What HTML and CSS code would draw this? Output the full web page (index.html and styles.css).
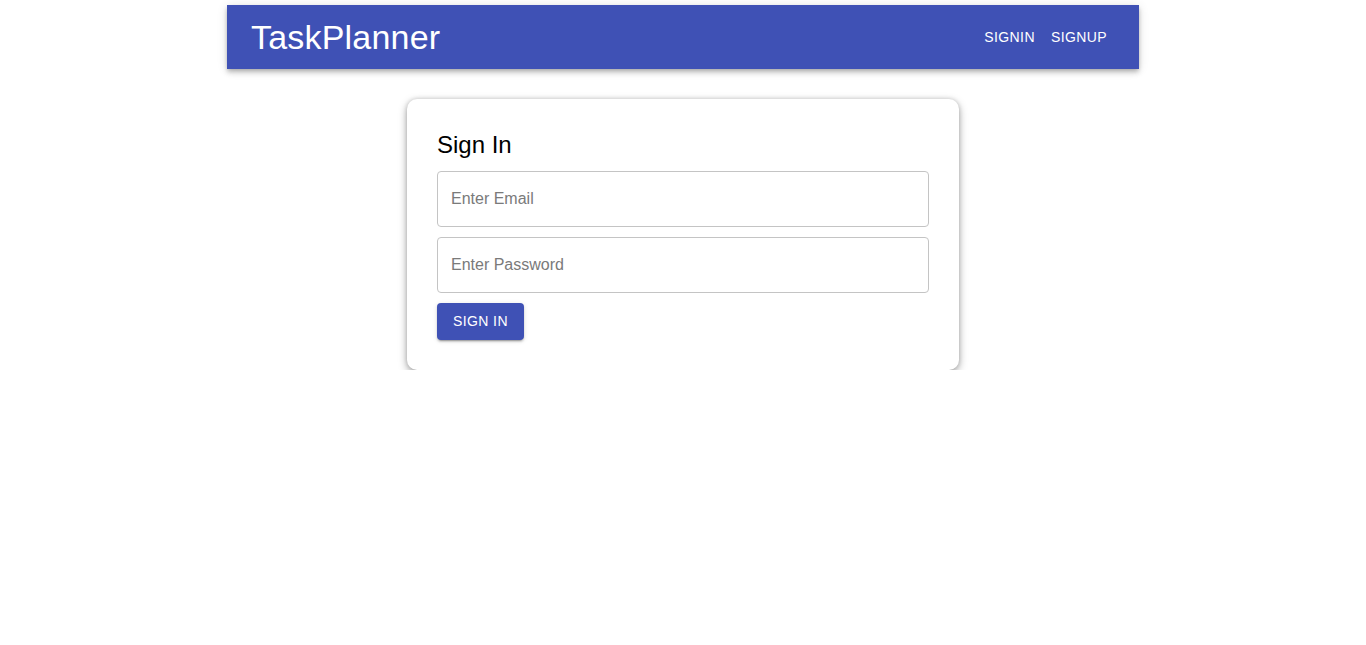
FILE: index.html
```html
<!DOCTYPE html>
<html lang="en">
<head>
<meta charset="utf-8">
<title>TaskPlanner</title>
<link rel="stylesheet" href="styles.css">
</head>
<body>
<div class="container">
  <header class="appbar">
    <div class="brand">TaskPlanner</div>
    <nav class="nav">
      <a class="nav-btn" href="#">Signin</a>
      <a class="nav-btn" href="#">Signup</a>
    </nav>
  </header>
  <main class="main">
    <form class="card">
      <h2 class="card-title">Sign In</h2>
      <input class="field" type="email" placeholder="Enter Email">
      <input class="field" type="password" placeholder="Enter Password">
      <div class="actions">
        <button class="btn" type="button">Sign In</button>
      </div>
    </form>
  </main>
</div>
</body>
</html>
```

FILE: styles.css
```css
* { box-sizing: border-box; }
html, body { margin: 0; padding: 0; background: #fff; }
body {
  font-family: "Liberation Sans", Arial, sans-serif;
  color: rgba(0,0,0,0.87);
}
.container {
  width: 912px;
  margin: 5px auto 0;
}
.appbar {
  height: 64px;
  background: #3f51b5;
  color: #fff;
  display: flex;
  align-items: center;
  justify-content: space-between;
  padding: 0 24px;
  box-shadow: 0 2px 4px -1px rgba(0,0,0,0.2), 0 4px 5px 0 rgba(0,0,0,0.14), 0 1px 10px 0 rgba(0,0,0,0.12);
}
.brand {
  font-size: 34px;
  line-height: 1.2;
  font-weight: 400;
  letter-spacing: 0.2px;
}
.nav { display: flex; gap: 0; }
.nav-btn {
  color: #fff;
  text-decoration: none;
  text-transform: uppercase;
  font-size: 14px;
  letter-spacing: 0.4px;
  padding: 6px 8px;
  line-height: 24px;
}
.main {
  display: flex;
  justify-content: center;
  padding-top: 30px;
}
.card {
  width: 552px;
  background: #fff;
  border-radius: 10px;
  padding: 30px;
  box-shadow: 0 3px 8px rgba(0,0,0,0.35), 0 0 4px rgba(0,0,0,0.15);
  display: flex;
  flex-direction: column;
}
.card-title {
  margin: 0 0 10px;
  font-size: 24px;
  font-weight: 400;
  line-height: 32px;
  color: #000;
}
.field {
  height: 56px;
  width: 100%;
  border: 1px solid #c4c4c4;
  border-radius: 4px;
  padding: 0 13px;
  font-family: inherit;
  font-size: 16px;
  color: rgba(0,0,0,0.87);
  margin-bottom: 10px;
  outline: none;
}
.field::placeholder { color: #7a7a7a; opacity: 1; }
.actions { display: flex; }
.btn {
  background: #3f51b5;
  color: #fff;
  border: none;
  border-radius: 4px;
  height: 36.5px;
  padding: 0 16px;
  font-family: inherit;
  font-size: 14px;
  letter-spacing: 0.4px;
  text-transform: uppercase;
  box-shadow: 0 3px 1px -2px rgba(0,0,0,0.2), 0 2px 2px 0 rgba(0,0,0,0.14), 0 1px 5px 0 rgba(0,0,0,0.12);
  cursor: pointer;
}
```
